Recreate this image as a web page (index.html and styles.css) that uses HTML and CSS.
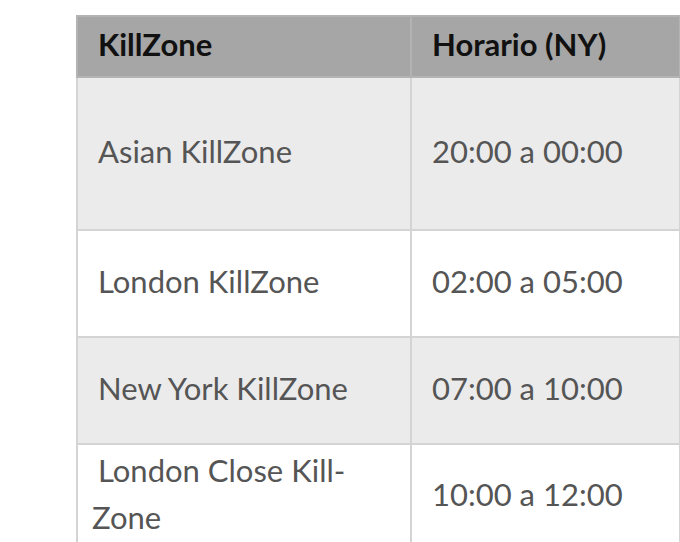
FILE: index.html
```html
<!DOCTYPE html>
<html lang="es">
<head>
<meta charset="utf-8">
<title>KillZones</title>
<link rel="stylesheet" href="styles.css">
</head>
<body>
<table class="kz-table">
  <colgroup>
    <col class="col-zone">
    <col class="col-time">
  </colgroup>
  <thead>
    <tr class="row-head">
      <th class="cell-zone">KillZone</th>
      <th class="cell-time">Horario (NY)</th>
    </tr>
  </thead>
  <tbody>
    <tr class="row-tall row-shaded">
      <td class="cell-zone">Asian KillZone</td>
      <td class="cell-time">20:00 a 00:00</td>
    </tr>
    <tr class="row-std">
      <td class="cell-zone">London KillZone</td>
      <td class="cell-time">02:00 a 05:00</td>
    </tr>
    <tr class="row-std row-shaded">
      <td class="cell-zone">New York KillZone</td>
      <td class="cell-time">07:00 a 10:00</td>
    </tr>
    <tr class="row-last">
      <td class="cell-zone">London Close Kill-<br>Zone</td>
      <td class="cell-time">10:00 a 12:00</td>
    </tr>
  </tbody>
</table>
</body>
</html>
```
FILE: styles.css
```css
html, body {
  margin: 0;
  padding: 0;
  background: #ffffff;
}

body {
  padding: 15px 0 0 76px;
  font-family: Lato, "Open Sans", "Liberation Sans", sans-serif;
}

.kz-table {
  border-collapse: collapse;
  table-layout: fixed;
  width: 603px;
}

.col-zone { width: 334px; }
.col-time { width: 269px; }

.kz-table th,
.kz-table td {
  border: 2px solid #d4d4d4;
  vertical-align: middle;
  text-align: left;
  padding: 0 0 4px 0;
  font-size: 31px;
  line-height: 47px;
}

.kz-table th {
  background: #a6a6a6;
  color: #111111;
  font-weight: 700;
  border-color: #b3b3b3;
}

.kz-table td {
  color: #555555;
  font-weight: 400;
}

.kz-table .cell-zone {
  padding-left: 14px;
  text-indent: 6px;
}

.kz-table .cell-time {
  padding-left: 20px;
}

.row-head { height: 61px; }
.row-tall { height: 153px; }
.row-std { height: 107px; }
.row-last { height: 104px; }

.row-shaded td { background: #ebebeb; }
```
